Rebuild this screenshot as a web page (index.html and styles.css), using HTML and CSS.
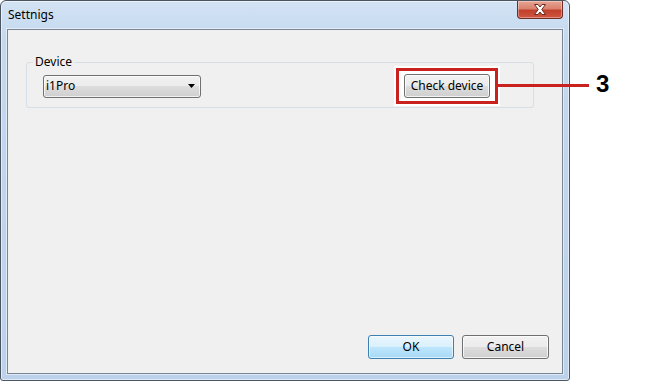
FILE: index.html
```html
<!DOCTYPE html>
<html>
<head>
<meta charset="utf-8">
<title>Settnigs</title>
<link rel="stylesheet" href="styles.css">
</head>
<body>
<div class="stage">
  <div class="window">
    <div class="titlebar">
      <span class="title">Settnigs</span>
      <div class="close">
        <svg width="14" height="11" viewBox="0 0 14 11">
          <path d="M1.5 0.5 H5 L7 3 L9 0.5 H12.5 L8.8 5.5 L12.5 10.5 H9 L7 8 L5 10.5 H1.5 L5.2 5.5 Z" fill="#ffffff" stroke="#6b2a22" stroke-width="1" stroke-linejoin="round"/>
        </svg>
      </div>
    </div>
    <div class="client">
      <fieldset class="group">
        <legend>Device</legend>
        <div class="row">
          <div class="combo">
            <span>i1Pro</span>
            <svg class="arrow" width="7" height="4" viewBox="0 0 7 4"><path d="M0 0 H7 L3.5 4 Z" fill="#000"/></svg>
          </div>
          <div class="highlight">
            <button class="btn check">Check device</button>
          </div>
        </div>
      </fieldset>
      <div class="footer">
        <button class="btn default ok">OK</button>
        <button class="btn cancel">Cancel</button>
      </div>
    </div>
  </div>
  <div class="callout-line"></div>
  <div class="callout-num">3</div>
</div>
</body>
</html>
```

FILE: styles.css
```css
html, body {
  margin: 0;
  padding: 0;
  background: #ffffff;
}
body {
  width: 672px;
  height: 381px;
  overflow: hidden;
  font-family: "Noto Sans", "Open Sans", sans-serif;
  font-size: 12px;
  color: #000;
}
.stage {
  position: relative;
  width: 672px;
  height: 381px;
}
.window {
  box-sizing: border-box;
  width: 570px;
  height: 381px;
  border: 1px solid #4b5561;
  border-radius: 6px 6px 3px 3px;
  background: linear-gradient(180deg, #d3e3f4 0%, #c4d8ee 10%, #bcd2ea 100%);
  box-shadow: inset 0 0 0 1px rgba(255,255,255,0.55);
  display: flex;
  flex-direction: column;
}
.titlebar {
  height: 28px;
  display: flex;
  align-items: flex-start;
  justify-content: space-between;
  padding-left: 7px;
  padding-right: 6px;
}
.title {
  margin-top: 6px;
  line-height: 16px;
  color: #000;
}
.close {
  width: 46px;
  height: 18px;
  box-sizing: border-box;
  border: 1px solid #6e2e28;
  border-top: none;
  border-radius: 0 0 4px 4px;
  background: linear-gradient(180deg, #e8a493 0%, #d9826e 45%, #c0402c 55%, #d2563f 100%);
  box-shadow: inset 0 0 0 1px rgba(255,255,255,0.35);
  display: flex;
  align-items: center;
  justify-content: center;
}
.close svg { display: block; }
.client {
  flex: 1;
  margin: 0 6px 6px 6px;
  border: 1px solid #7a8694;
  background: #f0f0f0;
  box-shadow: 0 0 0 1px rgba(255,255,255,0.5);
  display: flex;
  flex-direction: column;
}
.group {
  margin: 24px 0 0 18px;
  width: 508px;
  box-sizing: border-box;
  border: 1px solid #d5dfe5;
  border-radius: 3px;
  padding: 0 35px 3px 16px;
  min-width: 0;
}
.group legend {
  padding: 0 2px;
  margin-left: -10px;
  line-height: 16px;
  color: #000;
}
.row {
  display: flex;
  align-items: center;
  justify-content: space-between;
  margin-top: -2px;
}
.combo {
  box-sizing: border-box;
  width: 158px;
  height: 23px;
  border: 1px solid #707070;
  border-radius: 3px;
  background: linear-gradient(180deg, #f2f2f2 0%, #ebebeb 50%, #dddddd 50%, #cfcfcf 100%);
  box-shadow: inset 0 0 0 1px rgba(255,255,255,0.7);
  display: flex;
  align-items: center;
  justify-content: space-between;
  padding: 0 5px 0 2px;
  line-height: 16px;
}
.arrow { display: block; }
.highlight {
  border: 3px solid #c9211e;
  background: #ffffff;
  padding: 3px 5px;
  box-shadow: 0 0 0 2px #ffffff;
  display: flex;
}
.btn {
  box-sizing: border-box;
  height: 24px;
  border: 1px solid #707070;
  border-radius: 3px;
  background: linear-gradient(180deg, #f2f2f2 0%, #ebebeb 50%, #dddddd 50%, #cfcfcf 100%);
  box-shadow: inset 0 0 0 1px rgba(255,255,255,0.75);
  font-family: "Noto Sans", "Open Sans", sans-serif;
  font-size: 12px;
  line-height: 16px;
  color: #000;
  padding: 0;
  margin: 0;
}
.check { width: 86px; }
.footer {
  margin-top: auto;
  display: flex;
  justify-content: flex-end;
  gap: 8px;
  padding: 0 13px 14px 0;
}
.ok { width: 86px; }
.cancel { width: 87px; }
.default {
  border-color: #3c7fb1;
  background: linear-gradient(180deg, #eaf6fd 0%, #d9f0fc 50%, #bee6fd 50%, #a7d9f5 100%);
  box-shadow: inset 0 0 0 1px rgba(255,255,255,0.6);
}
.callout-line {
  position: absolute;
  left: 497px;
  top: 84px;
  width: 92px;
  height: 3px;
  background: #c9211e;
}
.callout-num {
  position: absolute;
  left: 596px;
  top: 70px;
  font-family: "Liberation Sans Narrow", "Liberation Sans", sans-serif;
  font-stretch: condensed;
  font-weight: bold;
  font-size: 24px;
  line-height: 28px;
  color: #000;
}
```
